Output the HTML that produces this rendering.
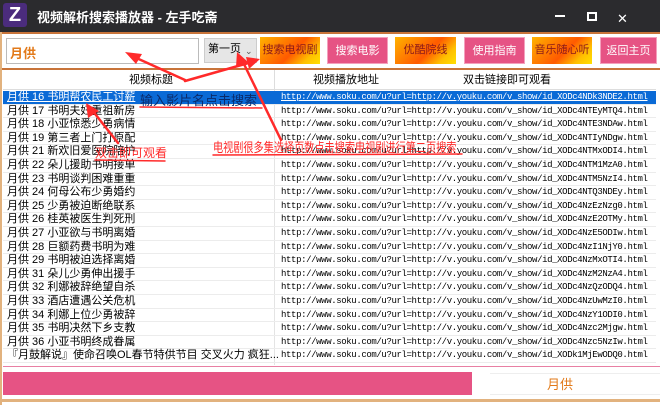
<!DOCTYPE html>
<html><head><meta charset="utf-8"><style>
*{margin:0;padding:0;box-sizing:border-box}
body{width:660px;height:405px;overflow:hidden;background:#fff;position:relative;font-family:"Liberation Sans","Noto Sans CJK SC",sans-serif}
.abs{position:absolute}
.title{left:0;top:0;width:660px;height:32px;background:#2b2b2e}
.logo{left:3px;top:3px;width:24px;height:24px;background:#4b2c7d;border-radius:3px;color:#fff;font:bold 20px/24px "Liberation Sans",sans-serif;text-align:center}
.ttl{left:37px;top:7px;color:#fff;font-size:13px;font-weight:bold}
.btn{top:37px;height:27px;font-size:11px;line-height:27px;text-align:center;white-space:nowrap}
.pink{background:#e65384;color:#fff;border:1px solid #f4a0bd}
.orng{background:linear-gradient(135deg,#ffb300 0%,#ff7a00 35%,#ff5a00 55%,#ffc000 80%,#ffe000 100%);color:#8b1a1a}
.row{position:absolute;left:3px;width:653px;height:13.6px;font-size:11px;line-height:13.6px;border-bottom:1px solid #ececec;color:#000}
.row .t{position:absolute;left:4px;top:0;white-space:nowrap}
.row .u{position:absolute;left:278px;top:0;font-family:"Liberation Mono",monospace;font-size:9px;letter-spacing:-0.38px;white-space:nowrap}
.sel{background:#0a6ad6;color:#fff}
.sel .t,.sel .u{text-decoration:underline}
.red{color:#ff2a2a;font-size:13px;white-space:nowrap}
</style></head><body>
<div class="abs title"></div>
<div class="abs logo">Z</div>
<div class="abs ttl">视频解析搜索播放器 - 左手吃斋</div>
<div class="abs" style="left:617px;top:11px;color:#fff;font-size:13px">✕</div>
<div class="abs" style="left:587px;top:12px;width:10px;height:9px;border:2px solid #fff"></div>
<div class="abs" style="left:555px;top:15px;width:10px;height:2px;background:#fff"></div>
<div class="abs" style="left:0;top:32px;width:660px;height:2px;background:#c8743a"></div>
<div class="abs" style="left:0;top:32px;width:2px;height:373px;background:#e2b27e"></div>
<div class="abs" style="left:6px;top:38px;width:193px;height:26px;border:1px solid #bbb"></div>
<div class="abs" style="left:10px;top:43px;color:#e27a1a;font-size:13px;font-weight:bold">月供</div>
<div class="abs" style="left:204px;top:38px;width:53px;height:25px;background:#e6e6e6;border:1px solid #ccc;font-size:11px;line-height:20px;padding-left:3px">第一页<span style="position:absolute;left:40px;top:2px;font-size:9px;color:#555">⌄</span></div>
<div class="abs btn orng" style="left:260px;width:60px">搜索电视剧</div>
<div class="abs btn pink" style="left:327px;width:61px">搜索电影</div>
<div class="abs btn orng" style="left:395px;width:61px">优酷院线</div>
<div class="abs btn pink" style="left:464px;width:61px">使用指南</div>
<div class="abs btn orng" style="left:532px;width:60px">音乐随心听</div>
<div class="abs btn pink" style="left:600px;width:57px">返回主页</div>
<div class="abs" style="left:2px;top:68px;width:658px;height:2px;background:#c8743a"></div>
<div class="abs" style="left:3px;top:70px;width:653px;height:20px;background:#fff;border-bottom:1px solid #ddd;font-size:11px;line-height:20px">
<span class="abs" style="left:126px">视频标题</span><span class="abs" style="left:310px">视频播放地址</span><span class="abs" style="left:460px">双击链接即可观看</span>
<span class="abs" style="left:271px;top:0;width:1px;height:20px;background:#ddd"></span></div>
<div class="abs" style="left:274px;top:90px;width:1px;height:275px;background:#e4e4e4"></div>
<div id="rows"></div>
<div class="abs" style="left:3px;top:366px;width:657px;height:1px;background:#e87fa3"></div>
<div class="abs" style="left:3px;top:372px;width:469px;height:23px;background:#e65384"></div>
<div class="abs" style="left:490px;top:373px;width:170px;height:22px;border-top:1px solid #eee;border-bottom:1px solid #eee;color:#e27a1a;font-size:13px;text-align:center;line-height:22px;padding-right:30px">月供</div>
<div class="abs" style="left:0;top:399px;width:660px;height:3px;background:#e2b27e"></div>
<script>
var d=[["月供 16 书明帮农民工讨薪","XODc4NDk3NDE2"],["月供 17 书明夫妇重祖新房","XODc4NTEyMTQ4"],["月供 18 小亚惊悉少勇病情","XODc4NTE3NDAw"],["月供 19 第三者上门打原配","XODc4NTIyNDgw"],["月供 21 新欢旧爱医院陪护","XODc4NTMxODI4"],["月供 22 朵儿援助书明接单","XODc4NTM1MzA0"],["月供 23 书明谈判困难重重","XODc4NTM5NzI4"],["月供 24 何母公布少勇婚约","XODc4NTQ3NDEy"],["月供 25 少勇被迫断绝联系","XODc4NzEzNzg0"],["月供 26 桂英被医生判死刑","XODc4NzE2OTMy"],["月供 27 小亚欲与书明离婚","XODc4NzE5ODIw"],["月供 28 巨额药费书明为难","XODc4NzI1NjY0"],["月供 29 书明被迫选择离婚","XODc4NzMxOTI4"],["月供 31 朵儿少勇伸出援手","XODc4NzM2NzA4"],["月供 32 利娜被辞绝望自杀","XODc4NzQzODQ4"],["月供 33 酒店遭遇公关危机","XODc4NzUwMzI0"],["月供 34 利娜上位少勇被辞","XODc4NzY1ODI0"],["月供 35 书明决然下乡支教","XODc4Nzc2Mjgw"],["月供 36 小亚书明终成眷属","XODc4Nzc5NzIw"],[" 『月鼓解说』使命召唤OL春节特供节目 交叉火力 疯狂...","XODk1MjEwODQ0"]];
var h="";d.forEach(function(r,i){h+='<div class="row'+(i==0?' sel':'')+'" style="top:'+(91+i*13.6)+'px"><span class="t">'+r[0]+'</span><span class="u">http://www.soku.com/u?url=http://v.youku.com/v_show/id_'+r[1]+'.html</span></div>';});
document.getElementById("rows").innerHTML=h;
</script>
<div class="abs red" style="left:140px;top:90px;color:#0a2a6a;font-size:13px">输入影片名点击搜索</div>
<div class="abs red" style="left:95px;top:144px;font-size:12px">双击即可观看</div>
<div class="abs red" style="left:213px;top:137px;font-size:13px;transform:scaleX(0.78);transform-origin:0 0">电视剧很多集选择页数点击搜索电视剧进行第二页搜索</div>
<svg class="abs" style="left:0;top:0" width="660" height="405">
<g stroke="#ff2a2a" stroke-width="2.5" fill="#ff2a2a" stroke-linecap="round">
<line x1="185" y1="80" x2="132" y2="56"/><polygon points="125,52 142,54 136,64" stroke="none"/>
<line x1="185" y1="81" x2="252" y2="62"/><polygon points="260,59 246,57 249,69" stroke="none"/>
<line x1="281" y1="140" x2="242" y2="60"/><polygon points="237,52 236,67 248,62" stroke="none"/>
<line x1="118" y1="143" x2="92" y2="110"/><polygon points="86,103 88,118 99,111" stroke="none"/>
<line x1="140" y1="107" x2="262" y2="108" stroke-width="1.5"/>
<line x1="95" y1="160" x2="165" y2="161" stroke-width="1.5"/>
<line x1="213" y1="155" x2="462" y2="154" stroke-width="1.5"/>
</g></svg>
</body></html>
